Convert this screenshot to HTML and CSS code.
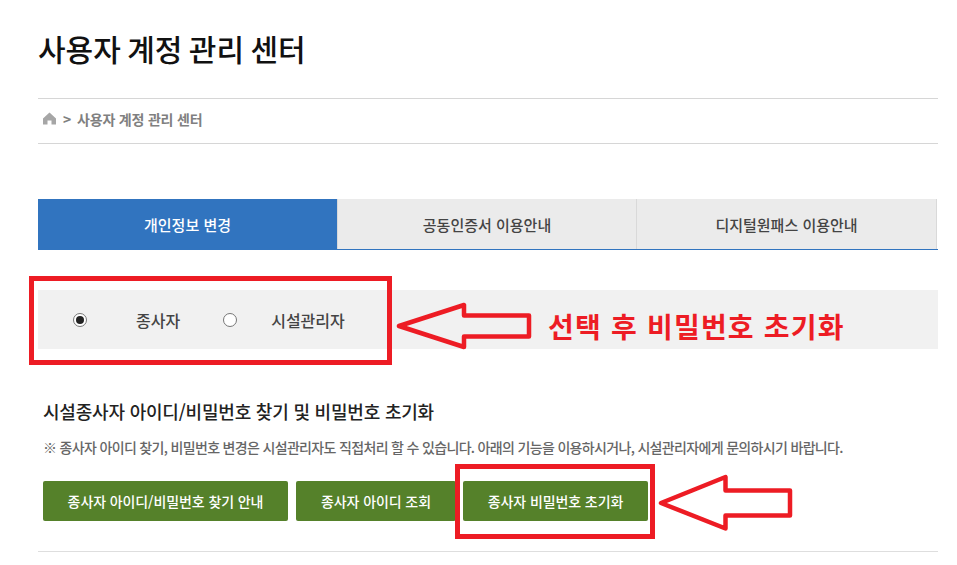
FILE: index.html
```html
<!DOCTYPE html>
<html lang="ko">
<head>
<meta charset="utf-8">
<title>사용자 계정 관리 센터</title>
<link rel="stylesheet" href="styles.css">
</head>
<body>
<main class="page">
  <h1 class="title">사용자 계정 관리 센터</h1>
  <nav class="crumb">
    <svg class="home" viewBox="0 0 13 13" width="13" height="13"><path d="M6.5 0.5 L13 6.5 V12.5 H8.5 V8.5 H4.5 V12.5 H0 V6.5 Z" fill="#a6a6a6"/></svg>
    <span class="crumb-sep">&gt;</span>
    <span>사용자 계정 관리 센터</span>
  </nav>
  <div class="tabs">
    <a class="tab tab-on">개인정보 변경</a>
    <a class="tab">공동인증서 이용안내</a>
    <a class="tab">디지털원패스 이용안내</a>
  </div>
  <div class="choice">
    <label class="opt opt-a"><span class="radio radio-on"></span><span>종사자</span></label>
    <label class="opt opt-b"><span class="radio"></span><span>시설관리자</span></label>
  </div>
  <h2 class="subtitle">시설종사자 아이디/비밀번호 찾기 및 비밀번호 초기화</h2>
  <p class="note">※ 종사자 아이디 찾기, 비밀번호 변경은 시설관리자도 직접처리 할 수 있습니다. 아래의 기능을 이용하시거나, 시설관리자에게 문의하시기 바랍니다.</p>
  <div class="buttons">
    <a class="btn btn-1">종사자 아이디/비밀번호 찾기 안내</a>
    <a class="btn btn-2">종사자 아이디 조회</a>
    <a class="btn btn-3">종사자 비밀번호 초기화</a>
  </div>
  <hr class="rule">
</main>
<div class="mark mark-choice"></div>
<div class="mark mark-btn"></div>
<svg class="arrow arrow-a" width="145" height="52" viewBox="0 0 145 52"><path d="M9 26 L74 5 V15.5 H139 V36.5 H74 V47 Z" fill="none" stroke="#ed1c24" stroke-width="4.5" stroke-linejoin="round"/></svg>
<svg class="arrow arrow-b" width="140" height="62" viewBox="0 0 140 62"><path d="M6 33 L70.5 7 V20.5 H135 V45.5 H70.5 V58.5 Z" fill="none" stroke="#ed1c24" stroke-width="4.5" stroke-linejoin="round"/></svg>
<div class="callout">선택 후 비밀번호 초기화</div>
</body>
</html>
```
FILE: styles.css
```css
* { box-sizing: border-box; }
html, body { margin: 0; padding: 0; background: #fff; }
body {
  width: 957px;
  height: 565px;
  overflow: hidden;
  position: relative;
  font-family: "Noto Sans CJK KR", "Noto Sans", sans-serif;
}
.page { width: 900px; margin-left: 38px; display: flow-root; }
.title {
  margin: 26px 0 0;
  font-size: 30px;
  line-height: 44px;
  font-weight: 500;
  word-spacing: -2px;
  color: #111;
}
.crumb {
  margin-top: 28px;
  height: 46px;
  border-top: 1px solid #d6d6d6;
  border-bottom: 1px solid #d6d6d6;
  display: flex;
  align-items: center;
  padding: 0 0 5px 5px;
  font-size: 14px;
  font-weight: 700;
  letter-spacing: -0.2px;
  color: #808080;
}
.home { margin-right: 7px; }
.crumb-sep { margin-right: 6px; }
.tabs {
  margin-top: 55px;
  display: flex;
  height: 51px;
  border-bottom: 1px solid #3174bf;
}
.tab {
  flex: none;
  width: 299px;
  display: flex;
  align-items: center;
  justify-content: center;
  background: #ebebeb;
  border-left: 1px solid #d9d9d9;
  font-size: 15px;
  font-weight: 500;
  color: #444;
}
.tab:last-child { width: 301px; border-right: 1px solid #d9d9d9; }
.tab-on { background: #3174bf; color: #fff; border-left: 0; margin-bottom: -1px; }
.choice {
  margin-top: 40px;
  height: 59px;
  background: #f1f1f1;
  display: flex;
  align-items: center;
  font-size: 16px;
  font-weight: 500;
  color: #444;
}
.opt { display: flex; align-items: center; }
.opt-a { margin-left: 35px; gap: 49px; }
.opt-b { margin-left: 43px; gap: 34px; }
.radio {
  width: 14px;
  height: 14px;
  border-radius: 50%;
  border: 1px solid #767676;
  background: #fff;
  display: flex;
  align-items: center;
  justify-content: center;
}
.radio-on::after {
  content: "";
  width: 8px;
  height: 8px;
  border-radius: 50%;
  background: #222;
}
.subtitle {
  margin: 50px 0 0 5px;
  font-size: 18px;
  line-height: 24px;
  font-weight: 500;
  letter-spacing: -0.2px;
  color: #222;
}
.note {
  margin: 14px 0 0 5px;
  font-size: 14px;
  line-height: 20px;
  font-weight: 500;
  letter-spacing: -0.67px;
  color: #666;
  white-space: nowrap;
}
.buttons { display: flex; margin: 24px 0 0 5px; gap: 8px; }
.btn {
  height: 40px;
  display: flex;
  align-items: center;
  justify-content: center;
  background: #55812a;
  border-radius: 2px;
  color: #fff;
  font-size: 14px;
  font-weight: 500;
  letter-spacing: -0.1px;
}
.btn-1 { width: 245px; }
.btn-2 { width: 160px; }
.btn-3 { width: 185px; margin-left: -1px; }
.rule { margin: 30px 0 0; border: 0; border-top: 1px solid #dedede; }
.mark { position: absolute; border: 5px solid #ed1c24; }
.mark-choice { left: 29px; top: 276px; width: 363px; height: 89px; }
.mark-btn { left: 455px; top: 464px; width: 200px; height: 75px; }
.arrow { position: absolute; }
.arrow-a { left: 390px; top: 300px; }
.arrow-b { left: 655px; top: 470px; }
.callout {
  position: absolute;
  left: 548px;
  top: 306px;
  font-size: 28px;
  line-height: 40px;
  font-weight: 700;
  letter-spacing: 1.2px;
  color: #ed1c24;
  white-space: nowrap;
}
```
